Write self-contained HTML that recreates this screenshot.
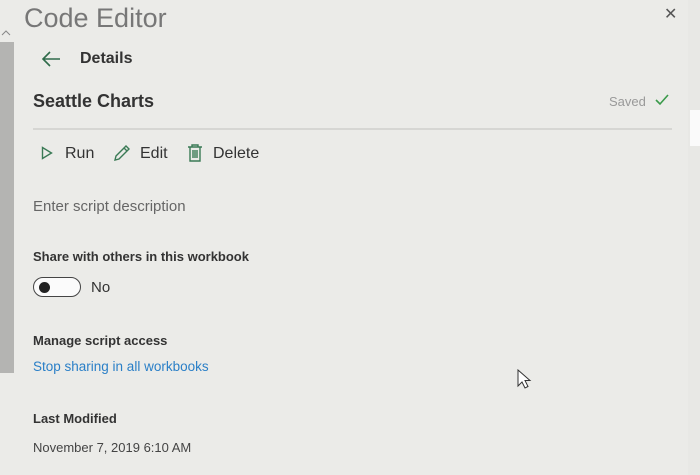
<!DOCTYPE html>
<html><head><style>
body{margin:0;width:700px;height:475px;background:#ebebe8;font-family:"Liberation Sans",sans-serif;position:relative;overflow:hidden;color:#252525}
.a{position:absolute;white-space:nowrap}
</style></head><body>
<div class="a" style="left:0;top:42px;width:14px;height:331px;background:#b4b4b2"></div>
<svg class="a" style="left:1px;top:30px" width="10" height="6" viewBox="0 0 10 6"><path d="M1 5l4-4 4 4" fill="none" stroke="#888" stroke-width="1"/></svg>
<div class="a" style="left:688px;top:0;width:12px;height:475px;background:#e8e8e5"></div>
<div class="a" style="left:690px;top:110px;width:10px;height:36px;background:#fafafa"></div>
<div class="a" style="left:24px;top:3px;font-size:27px;color:#777">Code Editor</div>
<div class="a" style="left:664px;top:4px;font-size:16px;color:#555">&#10005;</div>
<svg class="a" style="left:40px;top:50px" width="22" height="18" viewBox="0 0 22 18"><path d="M20 9H3M10 2L3 9l7 7" fill="none" stroke="#2f6b4a" stroke-width="1.6"/></svg>
<div class="a" style="left:80px;top:50px;font-size:16px;font-weight:bold;color:#333">Details</div>
<div class="a" style="left:33px;top:91px;font-size:18px;font-weight:bold;color:#333">Seattle Charts</div>
<div class="a" style="left:609px;top:94px;font-size:13px;color:#999">Saved</div>
<svg class="a" style="left:654px;top:93px" width="16" height="14" viewBox="0 0 16 14"><path d="M2 7l4 4 8-9" fill="none" stroke="#3a9a4a" stroke-width="1.6"/></svg>
<div class="a" style="left:33px;top:128px;width:639px;height:2px;background:#d6d6d3"></div>
<svg class="a" style="left:41px;top:146px" width="12" height="14" viewBox="0 0 12 14"><path d="M1.5 1.5v11l9-5.5z" fill="none" stroke="#3a7a55" stroke-width="1.4"/></svg>
<div class="a" style="left:65px;top:145px;font-size:16px;color:#333">Run</div>
<svg class="a" style="left:112px;top:143px" width="20" height="20" viewBox="0 0 20 20"><path d="M3 17l1-4L14 3l3 3L7 16zM12 5l3 3" fill="none" stroke="#3a7a55" stroke-width="1.4"/></svg>
<div class="a" style="left:140px;top:145px;font-size:16px;color:#333">Edit</div>
<svg class="a" style="left:186px;top:143px" width="18" height="20" viewBox="0 0 18 20"><path d="M2 4h14M6 4V2h6v2M4 4v14h10V4M7 7v8M9 7v8M11 7v8" fill="none" stroke="#3a7a55" stroke-width="1.4"/></svg>
<div class="a" style="left:213px;top:145px;font-size:16px;color:#333">Delete</div>
<div class="a" style="left:33px;top:198px;font-size:15px;color:#666">Enter script description</div>
<div class="a" style="left:33px;top:249px;font-size:13px;font-weight:bold;color:#333">Share with others in this workbook</div>
<div class="a" style="left:33px;top:277px;width:46px;height:18px;border:1.5px solid #444;border-radius:11px;background:#fbfbfb"></div>
<div class="a" style="left:39px;top:282px;width:11px;height:11px;border-radius:50%;background:#222"></div>
<div class="a" style="left:91px;top:279px;font-size:15px;color:#333">No</div>
<div class="a" style="left:33px;top:333px;font-size:13px;font-weight:bold;color:#333">Manage script access</div>
<div class="a" style="left:33px;top:359px;font-size:13.5px;color:#2a7fc7">Stop sharing in all workbooks</div>
<div class="a" style="left:33px;top:411px;font-size:13px;font-weight:bold;color:#333">Last Modified</div>
<div class="a" style="left:33px;top:440px;font-size:13px;color:#444">November 7, 2019 6:10 AM</div>
<svg class="a" style="left:517px;top:369px" width="16" height="22" viewBox="0 0 16 22"><path d="M1 1v16l4-4 3 6 3-1.5-3-6h5z" fill="#fff" stroke="#333" stroke-width="1"/></svg>
</body></html>
